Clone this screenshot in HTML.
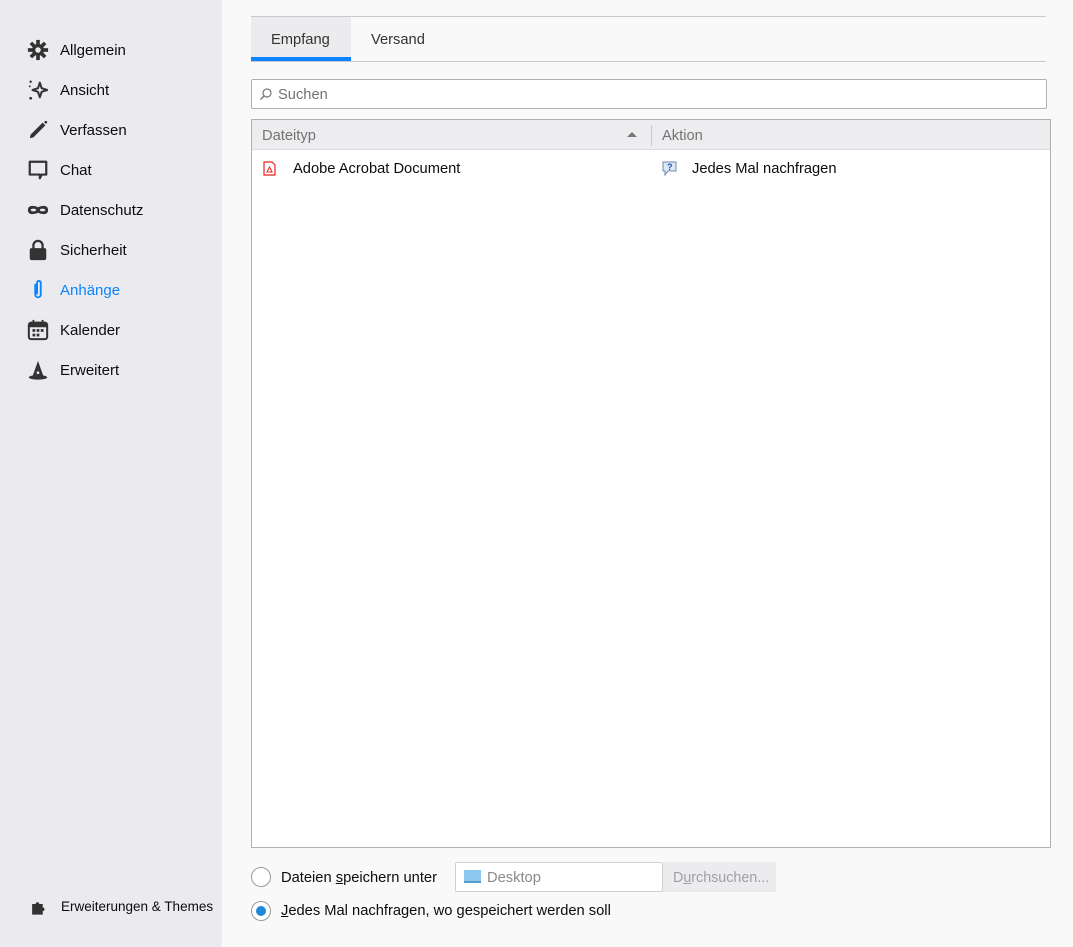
<!DOCTYPE html>
<html><head><meta charset="utf-8"><style>
*{box-sizing:border-box;margin:0;padding:0}
body{width:1073px;height:947px;background:#f9f9fa;font-family:"Liberation Sans",sans-serif;color:#0c0c0d;position:relative;overflow:hidden;font-size:14.7px}
#side{position:absolute;left:0;top:0;width:222px;height:947px;background:#ebeaef}
.it{position:absolute;left:0;height:40px;width:222px;display:flex;align-items:center}
.it svg{position:absolute;left:27px;width:22px;height:22px}
.it span{position:absolute;left:60px;font-size:15px;top:12px}
.abs{position:absolute}
</style></head><body>
<div id="side">
<div class="it" style="top:30px"><svg viewBox="0 0 24 24"><g fill="#333"><circle cx="12" cy="12" r="6.5"/><rect x="10" y="1" width="4" height="22"/><rect x="1" y="10" width="22" height="4"/><rect x="10" y="1" width="4" height="22" transform="rotate(45 12 12)"/><rect x="10" y="1" width="4" height="22" transform="rotate(-45 12 12)"/></g><circle cx="12" cy="12" r="3" fill="#ebeaef"/></svg><span>Allgemein</span></div>
<div class="it" style="top:70px"><svg viewBox="0 0 24 24"><path d="M14 4 L16 10 L22 12 L16 14 L14 20 L12 14 L6 12 L12 10Z" fill="none" stroke="#333" stroke-width="2.2" stroke-linejoin="round"/><circle cx="4" cy="3" r="1.3" fill="#333"/><circle cx="4" cy="21" r="1.5" fill="#333"/><circle cx="3" cy="8" r="1" fill="#333"/></svg><span>Ansicht</span></div>
<div class="it" style="top:110px"><svg viewBox="0 0 24 24"><path d="M3 21 L4 17 L17 4 L20 7 L7 20Z" fill="#333"/><circle cx="20.5" cy="3.5" r="1.5" fill="#333"/></svg><span>Verfassen</span></div>
<div class="it" style="top:150px"><svg viewBox="0 0 24 24"><path d="M3 3 H21 V17 H16 L14 21 V17 H3Z" fill="none" stroke="#333" stroke-width="2.4" stroke-linejoin="round"/></svg><span>Chat</span></div>
<div class="it" style="top:190px"><svg viewBox="0 0 24 24"><path d="M1 12 C1 6 8 7 12 9 C16 7 23 6 23 12 C23 18 16 17 12 15 C8 17 1 18 1 12Z" fill="#333"/><ellipse cx="7" cy="12" rx="3" ry="1.5" fill="#ebeaef"/><ellipse cx="17" cy="12" rx="3" ry="1.5" fill="#ebeaef"/></svg><span>Datenschutz</span></div>
<div class="it" style="top:230px"><svg viewBox="0 0 24 24"><rect x="3" y="10" width="18" height="13" rx="2" fill="#333"/><path d="M7 11 V7 A5 5 0 0 1 17 7 V11" fill="none" stroke="#333" stroke-width="2.5"/></svg><span>Sicherheit</span></div>
<div class="it" style="top:270px"><svg viewBox="0 0 24 24"><path d="M9 6 V17 A3 3 0 0 0 15 17 V4 A2 2 0 0 0 11 4 V16" fill="none" stroke="#0a84ff" stroke-width="2" stroke-linecap="round"/></svg><span style="color:#0a84ff">Anhänge</span></div>
<div class="it" style="top:310px"><svg viewBox="0 0 24 24"><rect x="2" y="4" width="20" height="18" rx="2.5" fill="none" stroke="#333" stroke-width="2.2"/><rect x="2" y="4" width="20" height="5" fill="#333"/><rect x="6" y="1" width="2" height="5" fill="#333"/><rect x="16" y="1" width="2" height="5" fill="#333"/><g fill="#333"><rect x="6" y="11" width="3" height="3"/><rect x="10.5" y="11" width="3" height="3"/><rect x="15" y="11" width="3" height="3"/><rect x="6" y="16" width="3" height="3"/><rect x="10.5" y="16" width="3" height="3"/></g></svg><span>Kalender</span></div>
<div class="it" style="top:350px"><svg viewBox="0 0 24 24"><path d="M12 2 L18 19 H6Z" fill="#333"/><ellipse cx="12" cy="20" rx="10" ry="2.5" fill="#333"/><circle cx="12" cy="15" r="1.5" fill="#ebeaef"/></svg><span>Erweitert</span></div>
<div class="it" style="top:887px"><svg viewBox="0 0 24 24" style="width:17px;height:17px;left:30px"><path d="M3 7 H8 A2.5 2.5 0 1 1 13 7 H18 V12 A2.5 2.5 0 1 1 18 17 V22 H3Z" fill="#333"/></svg><span style="left:61px;font-size:13.5px;top:12px">Erweiterungen &amp; Themes</span></div>
</div>

<div class="abs" style="left:251px;top:16px;width:795px;height:1px;background:#c8c8c8"></div>
<div class="abs" style="left:251px;top:17px;width:100px;height:40px;background:#ececee"></div>
<div class="abs" style="left:251px;top:57px;width:100px;height:4px;background:#0a84ff"></div>
<div class="abs" style="left:251px;top:61px;width:795px;height:1px;background:#c8c8c8"></div>
<div class="abs" style="left:271px;top:32px;color:#333">Empfang</div>
<div class="abs" style="left:371px;top:32px;color:#333">Versand</div>

<div class="abs" style="left:251px;top:79px;width:796px;height:30px;background:#fff;border:1px solid #b1b1b3;border-radius:2px"></div>
<svg class="abs" style="left:259px;top:87px" width="14" height="14" viewBox="0 0 14 14"><circle cx="8" cy="6" r="4" fill="none" stroke="#777" stroke-width="1.2"/><path d="M5 9 L1.5 12.5" stroke="#777" stroke-width="1.4"/></svg>
<div class="abs" style="left:278px;top:87px;color:#737373">Suchen</div>

<div class="abs" style="left:251px;top:119px;width:800px;height:729px;background:#fff;border:1px solid #b1b1b3"></div>
<div class="abs" style="left:252px;top:120px;width:798px;height:30px;background:#ededf0;border-bottom:1px solid #dcdce0"></div>
<div class="abs" style="left:262px;top:128px;color:#737373">Dateityp</div>
<div class="abs" style="left:627px;top:132px;width:0;height:0;border-left:5px solid transparent;border-right:5px solid transparent;border-bottom:5px solid #777"></div>
<div class="abs" style="left:651px;top:125px;width:1px;height:21px;background:#c8c8c8"></div>
<div class="abs" style="left:662px;top:128px;color:#737373">Aktion</div>
<svg class="abs" style="left:263px;top:161px" width="13" height="15" viewBox="0 0 13 15"><path d="M1 1 H9 L12 4 V14 H1Z" fill="#fff" stroke="#e22" stroke-width="1.2"/><path d="M4 11 L6.5 6 L9 11 Z" fill="none" stroke="#e22" stroke-width="1"/></svg>
<div class="abs" style="left:293px;top:161px">Adobe Acrobat Document</div>
<svg class="abs" style="left:662px;top:161px" width="15" height="15" viewBox="0 0 15 15"><path d="M1 1 H14 V10 H6 L3 14 V10 H1Z" fill="#dde8f4" stroke="#6b8ab3"/><text x="5" y="9" font-size="9" font-weight="bold" fill="#2255aa" font-family="Liberation Sans">?</text></svg>
<div class="abs" style="left:692px;top:161px">Jedes Mal nachfragen</div>

<div class="abs" style="left:251px;top:867px;width:20px;height:20px;border-radius:50%;border:1px solid #9a9a9e;background:#fff"></div>
<div class="abs" style="left:281px;top:870px">Dateien <u>s</u>peichern unter</div>
<div class="abs" style="left:455px;top:862px;width:208px;height:30px;background:#fff;border:1px solid #d0d0d4;border-radius:2px"></div>
<div class="abs" style="left:464px;top:870px;width:17px;height:13px;background:#8cc7f0;border-bottom:2px solid #5a9ccc"></div>
<div class="abs" style="left:487px;top:870px;color:#8a8a8e">Desktop</div>
<div class="abs" style="left:663px;top:862px;width:113px;height:30px;background:#ececee"></div>
<div class="abs" style="left:673px;top:870px;color:#a0a0a4;font-size:14.3px">D<u>u</u>rchsuchen...</div>
<div class="abs" style="left:251px;top:901px;width:20px;height:20px;border-radius:50%;border:1px solid #9a9a9e;background:#fff"></div>
<div class="abs" style="left:256px;top:906px;width:10px;height:10px;border-radius:50%;background:#1e88d8"></div>
<div class="abs" style="left:281px;top:903px"><u>J</u>edes Mal nachfragen, wo gespeichert werden soll</div>
</body></html>
